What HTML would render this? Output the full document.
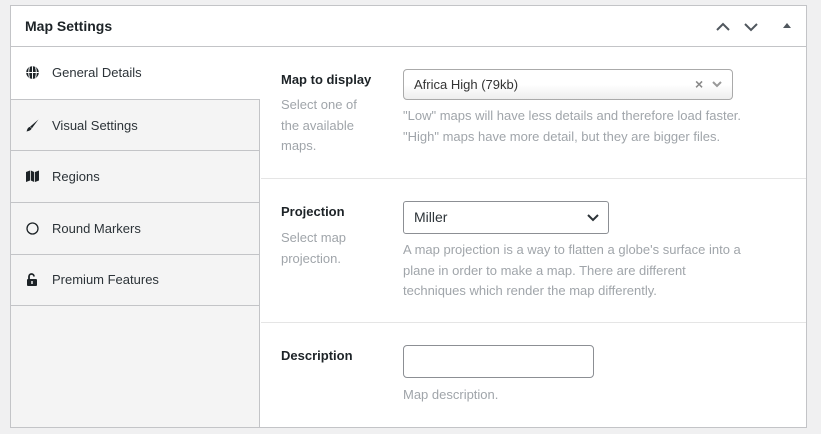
<!DOCTYPE html>
<html><head><style>
*{box-sizing:border-box;margin:0;padding:0}
body{width:821px;height:434px;background:#f0f0f1;font-family:"Liberation Sans",sans-serif;position:relative;overflow:hidden;color:#1d2327}
.panel{position:absolute;left:10px;top:5px;width:797px;height:423px;background:#fff;border:1px solid #c3c4c7}
.hdr{position:absolute;left:0;top:0;width:795px;height:41px;border-bottom:1px solid #c3c4c7}
.hdr h2{position:absolute;left:14px;top:12px;font-size:14px;font-weight:bold;color:#1d2327}
.side{position:absolute;left:0;top:41px;width:249px;height:380px;background:#f4f4f4;border-right:1px solid #c3c4c7}
.tab{position:absolute;left:0;width:249px;height:52px;border-bottom:1px solid #c3c4c7;font-size:13px;color:#2c3338}
.tab span{position:absolute;left:41px;top:18px}
.tab svg{position:absolute;left:15px;top:19px}
.abs{position:absolute}
.lbl{font-size:13px;font-weight:bold;color:#1d2327}
.hint{font-size:13px;color:#a0a5aa;line-height:20.5px}
.sep{position:absolute;left:250px;width:545px;height:1px;background:#e5e5e5}
</style></head><body>
<div class="panel">
 <div class="hdr"><h2>Map Settings</h2>
  <svg class="abs" style="left:704px;top:15px" width="16" height="12"><path d="M2 9 L8 3 L14 9" stroke="#50575e" stroke-width="2" fill="none"/></svg>
  <svg class="abs" style="left:732px;top:15px" width="16" height="12"><path d="M2 3 L8 9 L14 3" stroke="#50575e" stroke-width="2" fill="none"/></svg>
  <svg class="abs" style="left:771px;top:15px" width="10" height="8"><path d="M1 7 L5 2 L9 7Z" fill="#50575e"/></svg>
 </div>
 <div class="side">
  <div class="tab" style="top:0;background:#fff;width:250px;border-bottom:none"><svg width="13" height="13" viewBox="0 0 12 12"><circle cx="6" cy="6" r="5.8" fill="#1d2327"/><path d="M0.2 6H11.8M6 0.2V11.8M3.2 1.2Q1.8 6 3.2 10.8M8.8 1.2Q10.2 6 8.8 10.8" stroke="#fff" stroke-width="0.9" fill="none"/></svg><span>General Details</span></div>
  <div class="tab" style="top:52px;border-top:1px solid #c3c4c7;height:52px"><svg width="13" height="13" viewBox="0 0 12 12"><path d="M11.5 0.5 L5.5 8.5 L3.8 7 Z" fill="#1d2327"/><path d="M3.6 7.3 Q1.5 7.5 0.5 11.5 Q4.5 11 5.2 8.8Z" fill="#1d2327"/></svg><span>Visual Settings</span></div>
  <div class="tab" style="top:104px"><svg width="13" height="12" viewBox="0 0 13 12"><path d="M0 2 L4 0.5 L4 10.5 L0 12Z M4.8 0.5 L8.2 2 L8.2 12 L4.8 10.5Z M9 2 L13 0.5 L13 10.5 L9 12Z" fill="#1d2327"/></svg><span>Regions</span></div>
  <div class="tab" style="top:156px"><svg width="13" height="13" viewBox="0 0 13 13"><circle cx="6.5" cy="6.5" r="5.5" stroke="#1d2327" stroke-width="1.3" fill="none"/></svg><span>Round Markers</span></div>
  <div class="tab" style="top:207px"><svg width="12" height="13" viewBox="0 0 12 13"><path d="M3 6V3.5A2.5 2.5 0 0 1 8 3.5" stroke="#1d2327" stroke-width="1.8" fill="none"/><rect x="1" y="6" width="10" height="7" rx="1" fill="#1d2327"/><rect x="5.3" y="8" width="1.4" height="3" fill="#fff"/></svg><span>Premium Features</span></div>
 </div>
 <div class="sep" style="top:172px"></div>
 <div class="sep" style="top:316px"></div>
</div>
<div class="abs lbl" style="left:281px;top:72px">Map to display</div>
<div class="abs hint" style="left:281px;top:95px;width:88px">Select one of the available maps.</div>
<div class="abs" style="left:403px;top:69px;width:330px;height:31px;border:1px solid #aaa;border-radius:4px;background:linear-gradient(#fff 50%,#eee);font-size:13px;padding:7px 10px;color:#333">Africa High (79kb)
 <span class="abs" style="left:291px;top:6px;color:#888;font-weight:bold;font-size:14px">×</span>
 <svg class="abs" style="left:308px;top:11px" width="10" height="7"><path d="M1 1 L5 5 L9 1" stroke="#999" stroke-width="2" fill="none"/></svg>
</div>
<div class="abs hint" style="left:403px;top:106px;width:400px">"Low" maps will have less details and therefore load faster.<br>"High" maps have more detail, but they are bigger files.</div>

<div class="abs lbl" style="left:281px;top:204px">Projection</div>
<div class="abs hint" style="left:281px;top:228px;width:100px">Select map projection.</div>
<div class="abs" style="left:403px;top:201px;width:206px;height:33px;border:1px solid #8c8f94;border-radius:3px;background:#fff;font-size:14px;padding:7px 10px;color:#2c3338">Miller
 <svg class="abs" style="left:183px;top:12px" width="12" height="8"><path d="M1 1 L6 6 L11 1" stroke="#2c3338" stroke-width="2" fill="none"/></svg>
</div>
<div class="abs hint" style="left:403px;top:240px;width:375px">A map projection is a way to flatten a globe's surface into a<br>plane in order to make a map. There are different<br>techniques which render the map differently.</div>

<div class="abs lbl" style="left:281px;top:348px">Description</div>
<div class="abs" style="left:403px;top:345px;width:191px;height:33px;border:1px solid #8c8f94;border-radius:4px;background:#fff"></div>
<div class="abs hint" style="left:403px;top:385px">Map description.</div>
</body></html>
